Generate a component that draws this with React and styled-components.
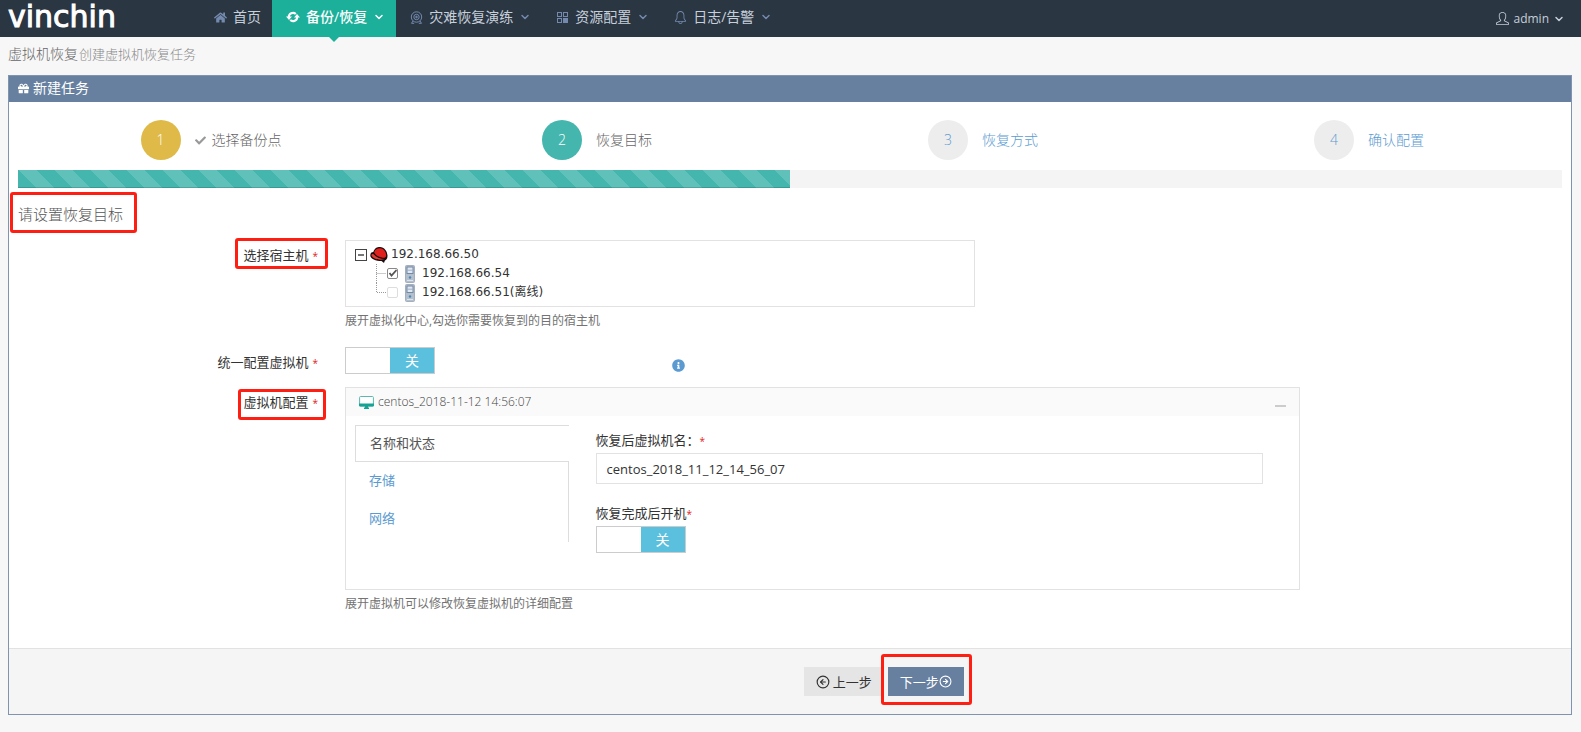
import React, { useState } from "react";
import styled, { createGlobalStyle, css } from "styled-components";

// icons
import { FaHome, FaGift, FaCheck, FaInfoCircle } from "react-icons/fa";
import { SlBell, SlUser } from "react-icons/sl";
import { ChevronDown, CircleArrowLeft, CircleArrowRight } from "lucide-react";

// vars
const colors = {
  nav: "#2b3643",
  navIcon: "#738aae",
  active: "#1caf9a",
  slate: "#67809f",
  slateBorder: "#8094b0",
  teal: "#44b6ae",
  gold: "#dfba49",
  link: "#5b9bd1",
  border: "#e2e2e2",
  info: "#5bc0de",
  mark: "#ff1f12",
};

const GlobalStyle = createGlobalStyle`
  * {
    box-sizing: border-box;
  }

  body {
    margin: 0;
    background: #f7f7f7;
    color: #333;
    font-family: "Open Sans", "Noto Sans CJK SC", sans-serif;
    font-size: 13px;
    line-height: 18px;
  }

  button,
  input {
    font: inherit;
  }

  a {
    color: inherit;
    text-decoration: none;
  }
`;

// styled
const Header = styled.header`
  display: flex;
  height: 37px;
  background: ${colors.nav};
  color: #c6cfda;
`;

const Logo = styled.a`
  flex: none;
  width: 200px;
  padding-left: 8px;
  color: #fff;
  font-family: "DejaVu Sans", sans-serif;
  font-size: 30px;
  line-height: 34px;
  -webkit-text-stroke: 1px #fff;
`;

const Nav = styled.nav`
  display: flex;
  flex: 1;
`;

const NavLink = styled.a`
  position: relative;
  display: flex;
  align-items: center;
  gap: 6px;
  padding: 0 11px 3px 14px;
  font-size: 14px;
  white-space: nowrap;

  > svg {
    flex: none;
    color: ${colors.navIcon};
  }

  ${(p) =>
    p.$active &&
    css`
      background: ${colors.active};
      color: #fff;
      font-weight: 500;

      > svg {
        color: #fff;
      }

      &::after {
        content: "";
        position: absolute;
        top: 100%;
        left: 50%;
        margin-left: -5px;
        border: 5px solid transparent;
        border-top-color: ${colors.active};
        border-bottom: 0;
      }
    `}
`;

const UserButton = styled.button`
  display: flex;
  align-items: center;
  gap: 4px;
  padding: 0 16px 0 0;
  border: 0;
  background: none;
  color: inherit;
  font-size: 12px;
`;

const Page = styled.main`
  padding: 0 9px 18px 8px;
`;

const PageTitle = styled.h1`
  display: flex;
  align-items: center;
  gap: 1px;
  height: 38px;
  margin: 0;
  padding-bottom: 5px;
  color: #666;
  font-size: 14px;
  font-weight: 300;

  small {
    color: #888;
    font-size: 13px;
  }
`;

const Portlet = styled.section`
  border: 1px solid ${colors.slateBorder};
  background: #fff;
`;

const PortletTitle = styled.h2`
  display: flex;
  align-items: center;
  gap: 4px;
  height: 26px;
  margin: 0;
  padding: 0 9px 2px;
  background: ${colors.slate};
  color: #fff;
  font-size: 14px;
  font-weight: 400;
`;

const PortletBody = styled.div`
  padding: 18px 9px 35px;
`;

const Steps = styled.ol`
  display: grid;
  grid-template-columns: repeat(4, 1fr);
  margin: 0 0 10px;
  padding: 0;
  list-style: none;
`;

const Step = styled.li`
  display: flex;
  align-items: center;
  justify-content: center;
  gap: 14px;
  color: ${(p) => (p.$reached ? "#666" : colors.link)};
  font-size: 14px;
  font-weight: 300;
`;

const StepNumber = styled.span`
  display: flex;
  align-items: center;
  justify-content: center;
  width: 40px;
  height: 40px;
  border-radius: 50%;
  background: ${(p) => p.$bg};
  color: ${(p) => p.$color};
`;

const StepText = styled.span`
  display: flex;
  align-items: center;
  gap: 6px;

  > svg {
    color: #999;
  }
`;

const Progress = styled.div`
  height: 18px;
  background: #f4f4f4;
`;

const ProgressBar = styled.div`
  height: 100%;
  background-color: ${colors.teal};
  background-image: linear-gradient(
    45deg,
    rgba(255, 255, 255, 0.15) 25%,
    transparent 25%,
    transparent 50%,
    rgba(255, 255, 255, 0.15) 50%,
    rgba(255, 255, 255, 0.15) 75%,
    transparent 75%,
    transparent
  );
  background-size: 36px 36px;
  box-shadow: inset 0 -1px 0 rgba(0, 0, 0, 0.15);
`;

// red frame drawn over the part that the reader should look at
const marked = css`
  position: relative;

  &::after {
    content: "";
    position: absolute;
    inset: ${(p) => p.$mark};
    border: 3px solid ${colors.mark};
    border-radius: 3px;
    pointer-events: none;
  }
`;

const SectionTitle = styled.h3`
  width: fit-content;
  margin: 16px 0;
  color: #555;
  font-size: 15px;
  font-weight: 300;
  line-height: 20px;
  ${marked}
`;

const Row = styled.div`
  display: grid;
  grid-template-columns: 300px 955fr 235fr;
  gap: 27px;
  margin-bottom: ${(p) => p.$space}px;
`;

const LabelCell = styled.div`
  padding-top: 6px;
  text-align: right;
`;

const FieldLabel = styled.span`
  display: inline-block;
  ${(p) => p.$mark && marked}
`;

const Star = styled.span`
  margin-left: ${(p) => (p.$tight ? 0 : 4)}px;
  color: #e02222;
  font-size: 10px;
`;

const Help = styled.p`
  margin: 5px 0 0;
  color: #737373;
  font-size: 12px;
`;

const TreeBox = styled.div`
  width: 66%;
  padding: 4px 9px;
  border: 1px solid ${colors.border};
  font-family: "DejaVu Sans", "Noto Sans CJK SC", sans-serif;
  font-size: 12px;
  line-height: 19px;
`;

const TreeRoot = styled.div`
  display: flex;
  align-items: center;
  gap: 3px;
  height: 19px;
`;

const TreeToggle = styled.button`
  width: 12px;
  height: 12px;
  padding: 2px;
  border: 1px solid #444;
  background: #fff;

  &::before {
    content: "";
    display: block;
    height: 2px;
    background: #777;
  }
`;

const TreeList = styled.ul`
  margin: 0;
  padding: 0 0 0 21px;
  list-style: none;
`;

const TreeItem = styled.li`
  height: 19px;

  label {
    display: flex;
    align-items: center;
    gap: 7px;
  }

  label > svg:first-child {
    margin-right: -6px;
  }
`;

const TreeCheck = styled.input`
  appearance: none;
  width: 11px;
  height: 11px;
  margin: 0;
  border: 1px solid #888;
  border-radius: 2px;
  background: #fff;

  &:checked {
    background: url("data:image/svg+xml,%3Csvg xmlns='http://www.w3.org/2000/svg' viewBox='0 0 9 9'%3E%3Cpath d='M1.5 4l2 2.500 5-5.500' fill='none' stroke='%23555' stroke-width='1.800'/%3E%3C/svg%3E");
  }

  &:disabled {
    border-color: #ddd;
  }
`;

const SwitchBox = styled.label`
  position: relative;
  display: grid;
  grid-template-columns: 1fr 1fr;
  width: 90px;
  height: 27px;
  border: 1px solid #ccc;
  background: #fff;
  color: #fff;
  font-size: 14px;
  line-height: 25px;
  text-align: center;
  cursor: pointer;

  input {
    position: absolute;
    inset: 0;
    margin: 0;
    opacity: 0;
  }
`;

const SwitchHalf = styled.span`
  background: ${(p) => (p.$fill ? colors.info : "#fff")};
`;

const SwitchLine = styled.div`
  display: grid;
  grid-template-columns: 34% 1fr;
  gap: 2px;
  align-items: start;

  > svg {
    margin-top: 12px;
    color: ${colors.link};
  }
`;

const VmPanel = styled.div`
  border: 1px solid ${colors.border};
`;

const VmTitle = styled.div`
  display: flex;
  align-items: center;
  gap: 4px;
  height: 28px;
  padding: 0 13px;
  background: #fafafa;
  color: #444;
  font-size: 12px;
  font-weight: 300;
`;

const Collapse = styled.button`
  width: 11px;
  height: 2px;
  margin: 7px 0 0 auto;
  padding: 0;
  border: 0;
  background: #ccc;
`;

const VmBody = styled.div`
  display: grid;
  grid-template-columns: 8fr 25fr;
  gap: 27px;
  padding: 9px 36px 36px 9px;
`;

const Tabs = styled.div`
  display: flex;
  flex-direction: column;
  align-self: start;
  height: 117px;

  &::after {
    content: "";
    flex: 1;
    border-right: 1px solid #ddd;
  }
`;

const Tab = styled.button`
  height: ${(p) => (p.$active ? 37 : 38)}px;
  padding: 0 14px 2px;
  border: 0 solid #ddd;
  border-width: ${(p) => (p.$active ? "1px 0 1px 1px" : "0 1px 0 0")};
  background: #fff;
  color: ${(p) => (p.$active ? "#555" : colors.link)};
  text-align: left;
`;

const VmForm = styled.div`
  padding-top: 6px;
`;

const BlockLabel = styled.label`
  display: block;
  margin-bottom: 3px;
`;

const TextInput = styled.input`
  display: block;
  width: 100%;
  height: 31px;
  margin-bottom: 20px;
  padding: 0 10px;
  border: 1px solid ${colors.border};
  color: #333;
  outline: 0;
`;

const Footer = styled.div`
  display: flex;
  justify-content: center;
  gap: 4px;
  padding: 18px 0 18px 12%;
  border-top: 1px solid ${colors.border};
  background: #f5f5f5;
`;

const FooterButton = styled.button`
  display: flex;
  align-items: center;
  gap: ${(p) => (p.$primary ? 0 : 3)}px;
  height: 29px;
  padding: 0 12px;
  border: 0;
  background: ${(p) => (p.$primary ? colors.slate : "#e5e5e5")};
  color: ${(p) => (p.$primary ? "#fff" : "#333")};
  white-space: nowrap;
  ${(p) => p.$mark && marked}
`;

// drawings
const RefreshIcon = () => (
  <svg width="14" height="12" viewBox="0 0 14 12">
    <g fill="none" stroke="currentColor" strokeWidth="2.200">
      <path d="M2.800 6.200A4.200 4.200 0 0 1 9.800 3" />
      <path d="M11.200 5.800A4.200 4.200 0 0 1 4.200 9" />
    </g>
    <path d="M0 5.500h6L3 9zM14 6.500H8L11 3z" fill="currentColor" />
  </svg>
);

const DrillIcon = () => (
  <svg width="13" height="13" viewBox="0 0 13 13" fill="none" stroke="currentColor">
    <circle cx="6.500" cy="6" r="5.200" />
    <circle cx="6.500" cy="6" r="2.700" />
    <circle cx="6.500" cy="6" r="0.800" fill="currentColor" />
    <path d="M3 10l-1.500 2.300h2.700M10 10l1.500 2.300H8.800" />
  </svg>
);

const ResourceIcon = () => (
  <svg width="13" height="13" viewBox="0 0 13 13" fill="none" stroke="currentColor">
    <rect x="1.500" y="1.500" width="4" height="4" />
    <rect x="7.500" y="1.500" width="4" height="4" />
    <rect x="1.500" y="7.500" width="4" height="4" />
    <rect x="7.500" y="7.500" width="4" height="4" fill="currentColor" />
  </svg>
);

const RedHatIcon = () => (
  <svg width="18" height="16" viewBox="0 0 18 16">
    <path
      d="M0.300 8.500C0.300 6 1.500 5 3.300 5 4.500 1.300 7 0 10 0c4 0 7.500 4 7.500 9 0 3-1.500 4-2.700 4.700L14 16l-2.500-2C6 14 0.300 12 0.300 8.500z"
      fill="#1b0d0d"
    />
    <path
      d="M4.200 5.200C5.200 2.200 7.200 1.200 10 1.200c3.300 0 6 3.300 6.200 7 0 2.200-1.900 3-4.200 2.400C8.500 10 5 8 4.200 5.200z"
      fill="#e0201d"
    />
    <path d="M1.300 8C2 6.700 3 6.800 3.600 7.300 6 10.300 10 12 14.500 12 10 13.800 2.500 12 1.300 8z" fill="#e53a34" />
  </svg>
);

const ServerIcon = () => (
  <svg width="10" height="18" viewBox="0 0 10 18">
    <rect x="0.500" y="0.500" width="9" height="17" rx="1" fill="#b4bfcd" stroke="#a3afbf" />
    <rect x="2" y="2" width="6" height="6.500" fill="#dfe8f3" stroke="#7588a2" />
    <path d="M2 5.200h6" stroke="#9fb0c6" />
    <circle cx="5" cy="12.500" r="1.200" fill="#4d87b5" />
    <path d="M2 15.500h6" stroke="#dde3eb" />
  </svg>
);

const Branch = ({ last }) => (
  <svg width="10" height="19" viewBox="0 0 10 19">
    <path
      d={last ? "M0.500 0V9.500H10" : "M0.500 0V19M0.500 9.500H10"}
      fill="none"
      stroke="#999"
      strokeDasharray="1 1"
    />
  </svg>
);

const MonitorIcon = () => (
  <svg width="15" height="14" viewBox="0 0 15 14">
    <rect x="0.600" y="1.500" width="13.800" height="9.500" rx="1" fill="#fff" stroke="#5cb8ae" />
    <path d="M0 8.500h15v2q0 1-1 1H1q-1 0-1-1zM6 11h3v1.500h1V14H5v-1.500h1z" fill="#16a394" />
  </svg>
);

const Arrow = () => <ChevronDown size={12} strokeWidth={3} />;

const navItems = [
  { text: "首页", icon: <FaHome size={13} /> },
  { text: "备份/恢复", icon: <RefreshIcon />, active: true, menu: true },
  { text: "灾难恢复演练", icon: <DrillIcon />, menu: true },
  { text: "资源配置", icon: <ResourceIcon />, menu: true },
  { text: "日志/告警", icon: <SlBell size={13} />, menu: true },
];

const steps = [
  { text: "选择备份点", bg: colors.gold, color: "#fff", reached: true, done: true },
  { text: "恢复目标", bg: colors.teal, color: "#fff", reached: true },
  { text: "恢复方式", bg: "#ededed", color: colors.link },
  { text: "确认配置", bg: "#ededed", color: colors.link },
];

const tabs = ["名称和状态", "存储", "网络"];

const Switch = ({ id, label }) => {
  const [on, setOn] = useState(false);
  return (
    <SwitchBox>
      <input
        id={id}
        type="checkbox"
        role="switch"
        aria-label={label}
        checked={on}
        onChange={() => setOn(!on)}
      />
      <SwitchHalf $fill={on}>{on && "开"}</SwitchHalf>
      <SwitchHalf $fill={!on}>{!on && "关"}</SwitchHalf>
    </SwitchBox>
  );
};

const App = () => {
  const [_checked, setChecked] = useState(true);
  const [_tab, setTab] = useState(tabs[0]);
  const [_name, setName] = useState("centos_2018_11_12_14_56_07");

  return (
    <>
      <GlobalStyle />
      <Header>
        <Logo href="#">vinchin</Logo>
        <Nav>
          {navItems.map((n) => (
            <NavLink key={n.text} href="#" $active={n.active}>
              {n.icon}
              {n.text}
              {n.menu && <Arrow />}
            </NavLink>
          ))}
        </Nav>
        <UserButton type="button">
          <SlUser size={13} />
          <span>admin</span>
          <Arrow />
        </UserButton>
      </Header>
      <Page>
        <PageTitle>
          虚拟机恢复 <small>创建虚拟机恢复任务</small>
        </PageTitle>
        <Portlet>
          <PortletTitle>
            <FaGift size={11} />
            新建任务
          </PortletTitle>
          <PortletBody>
            <Steps>
              {steps.map((s, index) => (
                <Step key={s.text} $reached={s.reached}>
                  <StepNumber $bg={s.bg} $color={s.color}>
                    {index + 1}
                  </StepNumber>
                  <StepText>
                    {s.done && <FaCheck size={11} />}
                    {s.text}
                  </StepText>
                </Step>
              ))}
            </Steps>
            <Progress>
              <ProgressBar style={{ width: `${(2 / steps.length) * 100}%` }} />
            </Progress>
            <SectionTitle $mark="-12px -14px -9px -8px">请设置恢复目标</SectionTitle>

            <Row $space={17}>
              <LabelCell>
                <FieldLabel $mark="-8px -10px -4px -8px">
                  选择宿主机
                  <Star>*</Star>
                </FieldLabel>
              </LabelCell>
              <div>
                <TreeBox>
                  <TreeRoot>
                    <TreeToggle type="button" aria-label="折叠" />
                    <RedHatIcon />
                    192.168.66.50
                  </TreeRoot>
                  <TreeList>
                    <TreeItem>
                      <label>
                        <Branch />
                        <TreeCheck
                          type="checkbox"
                          checked={_checked}
                          onChange={() => setChecked(!_checked)}
                        />
                        <ServerIcon />
                        192.168.66.54
                      </label>
                    </TreeItem>
                    <TreeItem>
                      <label>
                        <Branch last />
                        <TreeCheck type="checkbox" disabled />
                        <ServerIcon />
                        192.168.66.51(离线)
                      </label>
                    </TreeItem>
                  </TreeList>
                </TreeBox>
                <Help>展开虚拟化中心,勾选你需要恢复到的目的宿主机</Help>
              </div>
            </Row>

            <Row $space={13}>
              <LabelCell>
                <FieldLabel as="label" htmlFor="unified">
                  统一配置虚拟机
                  <Star>*</Star>
                </FieldLabel>
              </LabelCell>
              <SwitchLine>
                <Switch id="unified" label="统一配置虚拟机" />
                <FaInfoCircle size={13} />
              </SwitchLine>
            </Row>

            <Row $space={0}>
              <LabelCell>
                <FieldLabel $mark="-4px -8px -8px -5px">
                  虚拟机配置
                  <Star>*</Star>
                </FieldLabel>
              </LabelCell>
              <div>
                <VmPanel>
                  <VmTitle>
                    <MonitorIcon />
                    centos_2018-11-12 14:56:07
                    <Collapse type="button" aria-label="收起" />
                  </VmTitle>
                  <VmBody>
                    <Tabs role="tablist">
                      {tabs.map((t) => (
                        <Tab
                          key={t}
                          type="button"
                          role="tab"
                          aria-selected={t === _tab}
                          $active={t === _tab}
                          onClick={() => setTab(t)}
                        >
                          {t}
                        </Tab>
                      ))}
                    </Tabs>
                    <VmForm>
                      <BlockLabel htmlFor="vm-name">
                        恢复后虚拟机名：<Star $tight>*</Star>
                      </BlockLabel>
                      <TextInput
                        id="vm-name"
                        type="text"
                        value={_name}
                        onChange={(e) => setName(e.target.value)}
                      />
                      <BlockLabel htmlFor="power-on">
                        恢复完成后开机<Star $tight>*</Star>
                      </BlockLabel>
                      <Switch id="power-on" label="恢复完成后开机" />
                    </VmForm>
                  </VmBody>
                </VmPanel>
                <Help>展开虚拟机可以修改恢复虚拟机的详细配置</Help>
              </div>
            </Row>
          </PortletBody>
          <Footer>
            <FooterButton type="button">
              <CircleArrowLeft size={14} />
              上一步
            </FooterButton>
            <FooterButton type="button" $primary $mark="-13px -8px -9px -7px">
              下一步
              <CircleArrowRight size={13} />
            </FooterButton>
          </Footer>
        </Portlet>
      </Page>
    </>
  );
};

export default App;
